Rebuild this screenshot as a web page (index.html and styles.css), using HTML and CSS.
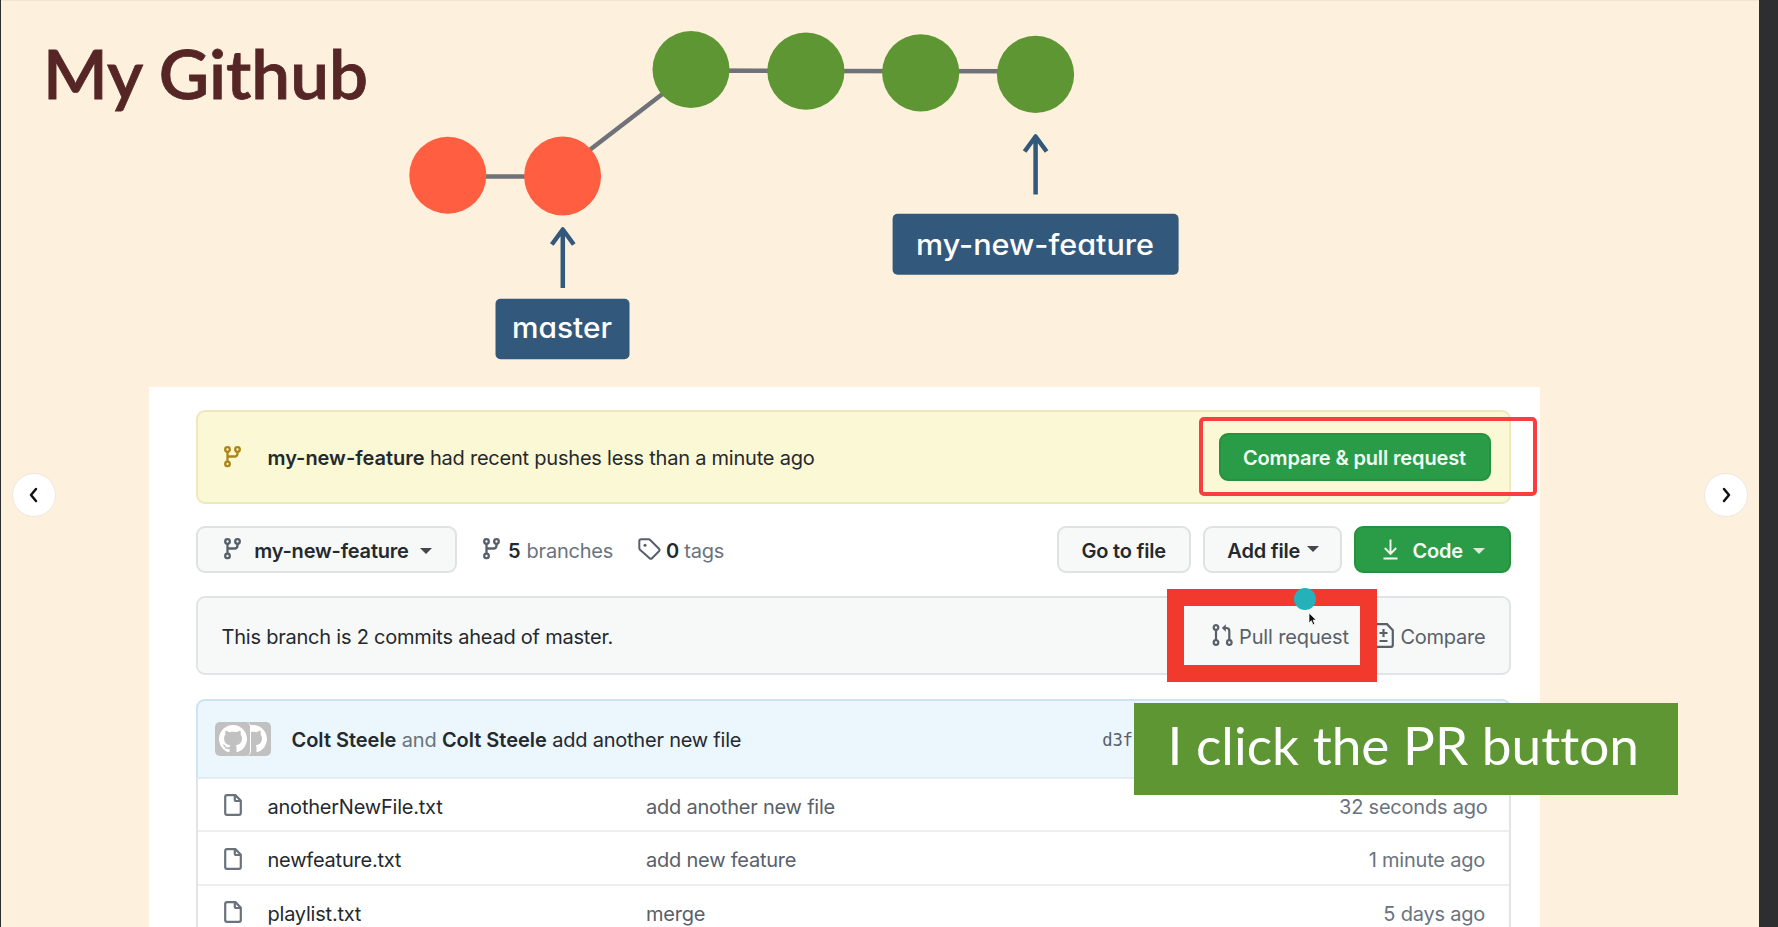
FILE: index.html
```html
<!DOCTYPE html>
<html lang="en">
<head>
<meta charset="utf-8">
<title>My Github</title>
<link rel="stylesheet" href="styles.css">
</head>
<body>
<svg class="defs" width="0" height="0" aria-hidden="true">
  <symbol id="branch" viewBox="0 0 17 21.5">
    <g fill="none" stroke="currentColor" stroke-width="2.3">
      <circle cx="3.5" cy="3.5" r="2.3"/><circle cx="13.5" cy="3.5" r="2.3"/><circle cx="3.5" cy="18" r="2.3"/>
      <path d="M3.5 5.8v9.9M13.5 5.8v1.7q0 3-3 3H3.5"/>
    </g>
  </symbol>
  <symbol id="file" viewBox="0 0 18 22">
    <path d="M3 1.2h8.4L16.8 6.800V19q0 1.800-1.800 1.800H3q-1.800 0-1.800-1.800V3q0-1.800 1.800-1.800zM10.800 1.500V5.500q0 1.500 1.500 1.500h4.300" fill="none" stroke="currentColor" stroke-width="2.2"/>
  </symbol>
  <symbol id="octocat" viewBox="0 0 16 16">
    <path fill="currentColor" d="M8 0C3.58 0 0 3.58 0 8c0 3.540 2.290 6.530 5.470 7.590.4.070.55-.170.55-.380 0-.190-.010-.820-.010-1.490-2.010.370-2.530-.490-2.690-.940-.090-.230-.480-.940-.820-1.130-.280-.150-.680-.520-.010-.530.630-.010 1.080.580 1.230.820.720 1.210 1.870.870 2.330.660.070-.520.280-.870.510-1.070-1.780-.200-3.640-.890-3.640-3.950 0-.870.310-1.590.820-2.150-.080-.200-.360-1.020.080-2.120 0 0 .670-.210 2.200.820.640-.180 1.320-.270 2-.270s1.360.090 2 .270c1.530-1.040 2.200-.820 2.200-.820.440 1.100.160 1.920.080 2.120.510.560.820 1.270.820 2.150 0 3.070-1.870 3.750-3.650 3.950.290.250.540.730.540 1.480 0 1.070-.010 1.930-.010 2.200 0 .210.150.460.550.380A8.010 8.010 0 0 0 16 8c0-4.420-3.580-8-8-8z"/>
  </symbol>
</svg>
<main class="slide">
  <svg class="diagram" viewBox="0 0 1759 387" width="1759" height="387">
    <text class="title" x="43" y="99" textLength="325" lengthAdjust="spacingAndGlyphs">My Github</text>
    <g class="links">
      <path d="M448 176.500H563M563 170.500L691 72M691 70.600L806 71L1035 71.300"/>
    </g>
    <g class="base"><circle cx="447.800" cy="175.300" r="38.500"/><ellipse cx="562.600" cy="176" rx="38.500" ry="39.400"/></g>
    <g class="feature"><circle cx="691" cy="69.500" r="38.500"/><circle cx="805.900" cy="71.200" r="38.600"/><circle cx="920.700" cy="72.800" r="38.600"/><circle cx="1035.500" cy="74.400" r="38.600"/></g>
    <g class="arrows">
      <path d="M562.800 288V229.500M551.800 244.500L562.800 229.500L573.800 244.500"/>
      <path d="M1035.600 194.500V136.500M1024.600 151.500L1035.600 136.500L1046.600 151.500"/>
    </g>
    <g class="tag-boxes"><rect x="495.500" y="298.700" width="134" height="60.500" rx="5"/><rect x="892.600" y="213.700" width="286" height="61" rx="5"/></g>
    <text class="ref" x="512" y="338.300" textLength="100" lengthAdjust="spacingAndGlyphs">master</text>
    <text class="ref" x="916" y="254.800" textLength="238" lengthAdjust="spacingAndGlyphs">my-new-feature</text>
  </svg>

  <section class="repo">
    <div class="notice">
      <svg class="i-branch"><use href="#branch"/></svg>
      <p class="notice-text"><b>my-new-feature</b> <span>had recent pushes less than a minute ago</span></p>
      <button class="btn primary compare-pr">Compare &amp; pull request</button>
    </div>
    <div class="toolbar">
      <button class="btn picker"><svg class="i-branch"><use href="#branch"/></svg><span>my-new-feature</span><i class="caret"></i></button>
      <a class="stat branches"><svg class="i-branch"><use href="#branch"/></svg><b>5</b><span>branches</span></a>
      <a class="stat tags"><svg class="i-tag" viewBox="0 0 23 23"><path d="M1.300 3.300q0-2 2-2h7.200q1 0 1.700.7l8.800 8.800q1.200 1.200 0 2.400l-7 7q-1.200 1.200-2.400 0L2 11.700q-.7-.7-.7-1.700z" fill="none" stroke="currentColor" stroke-width="2"/><circle cx="7" cy="7.300" r="1.500" fill="currentColor"/></svg><b>0</b><span>tags</span></a>
      <button class="btn goto">Go to file</button>
      <button class="btn add"><span>Add file</span><i class="caret"></i></button>
      <button class="btn primary code"><svg class="i-down" viewBox="0 0 15 21"><path d="M7.500 .5v14M1.800 9l5.700 5.800L13.200 9M.5 19.500h14" fill="none" stroke="currentColor" stroke-width="1.900"/></svg><span>Code</span><i class="caret"></i></button>
    </div>
    <div class="ahead">
      <span class="ahead-text">This branch is 2 commits ahead of master.</span>
      <a class="action pull"><svg class="i-pull" viewBox="0 0 21 22"><g fill="none" stroke="currentColor" stroke-width="2.200"><circle cx="4" cy="3.500" r="2.300"/><circle cx="4" cy="18.500" r="2.300"/><circle cx="17.300" cy="18.500" r="2.300"/><path d="M4 6v10M17.300 16V7q0-3-3-3h-2.800"/></g><path d="M9.800 4l4-3.800v7.600z" fill="currentColor"/></svg><span>Pull request</span></a>
      <a class="action diff"><svg class="i-diff" viewBox="0 0 21 25"><g fill="none" stroke="currentColor" stroke-width="2.200"><path d="M3 1.200h11l5.800 6V22q0 1.800-1.800 1.800H3q-1.800 0-1.800-1.800V3q0-1.800 1.800-1.800zM6.500 10h8M10.500 6v8M6.500 18h8"/></g></svg><span>Compare</span></a>
    </div>
    <div class="files">
      <div class="commit">
        <span class="avatars"><i class="avatar front"><svg><use href="#octocat"/></svg></i><i class="avatar back"><svg><use href="#octocat"/></svg></i></span>
        <p class="commit-text"><b>Colt Steele</b> <em>and</em> <b>Colt Steele</b> <span>add another new file</span></p>
        <code class="sha">d3f</code>
      </div>
      <div class="row"><svg class="i-file"><use href="#file"/></svg><span class="name">anotherNewFile.txt</span><span class="msg">add another new file</span><time class="recent">32 seconds ago</time></div>
      <div class="row"><svg class="i-file"><use href="#file"/></svg><span class="name">newfeature.txt</span><span class="msg">add new feature</span><time>1 minute ago</time></div>
      <div class="row"><svg class="i-file"><use href="#file"/></svg><span class="name">playlist.txt</span><span class="msg">merge</span><time>5 days ago</time></div>
    </div>
  </section>

  <div class="mark thin"></div>
  <div class="mark thick"></div>
  <div class="pointer-dot"></div>
  <svg class="cursor" viewBox="0 0 10 16" width="9" height="14"><path d="M1 1v11.500l2.700-2.600 1.800 4.600 2-.8-1.800-4.500h3.500z" fill="#111" stroke="#fff" stroke-width=".8"/></svg>
  <svg class="callout" width="544" height="92.500"><text x="33.500" y="61.700" textLength="471.500" lengthAdjust="spacingAndGlyphs">I click the PR button</text></svg>
  <button class="nav prev"><svg width="10" height="16" viewBox="0 0 10 16"><path d="M7 2L2 8l5 6"/></svg></button>
  <button class="nav next"><svg width="10" height="16" viewBox="0 0 10 16"><path d="M3 2l5 6-5 6"/></svg></button>
</main>
</body>
</html>
```
FILE: styles.css
```css
* { box-sizing: border-box; }
body { margin: 0; width: 1778px; height: 927px; overflow: hidden; background: #2d2e30; font-family: Inter, "Liberation Sans", sans-serif; font-size: 20px; letter-spacing: -.22px; color: #24292e; }
.defs { position: absolute; }
.slide { position: relative; width: 1758px; height: 927px; margin-left: 1px; background: #fdf0dc; border-top: 1px solid #f3e5d1; overflow: hidden; }
.diagram { display: block; margin: -1px 0 0 -1px; letter-spacing: 0; }
.title { font: 600 68px Lato, sans-serif; font-variant-ligatures: none; fill: #562626; stroke: #562626; stroke-width: .8; }
.ref { font: 500 28.500px Inter, sans-serif; font-feature-settings: "cv11"; fill: #fff; }
.links path { fill: none; stroke: #6f7279; stroke-width: 4.500; }
.base { fill: #ff5f40; }
.feature { fill: #5d9632; }
.arrows path { fill: none; stroke: #32597b; stroke-width: 4.500; stroke-linejoin: round; }
.tag-boxes { fill: #32597b; }

.repo { width: 1391px; height: 541px; margin-left: 148px; background: #fff; padding: 23px 29px 0 47px; white-space: nowrap; }
.repo svg { flex: none; display: block; }
b { font-weight: 600; letter-spacing: -.02px; }
.repo span, .repo p, .repo time, .stat b { padding-top: 3px; }
.commit-text span, .notice-text span { padding-top: 0; }
.repo .notice-text, .repo .commit-text { padding-top: 2px; }
.i-branch { width: 17px; height: 21.500px; color: #57606a; }
.notice { height: 93.500px; display: flex; align-items: center; border: 2px solid #efe7bd; border-radius: 9px; background: #fbf8d6; padding: 0 18.500px 0 26px; }
.notice .i-branch { color: #ac8518; }
.notice-text { margin: 0 auto 0 26.500px; }
.btn { font: 600 20px Inter, sans-serif; letter-spacing: -.2px; color: #24292e; height: 47px; padding: 0; border: 2px solid #dfe2e3; border-radius: 9px; background: #f7f9f8; display: flex; align-items: center; justify-content: center; }
.primary { color: #f3fbf4; background: #2a9c48; border-color: #27913f; }
.compare-pr { width: 272px; height: 48.500px; padding-top: 2px; letter-spacing: -.13px; }
.caret { border: 6px solid transparent; border-top-color: currentColor; border-bottom: 0; opacity: .85; }
.toolbar { display: flex; align-items: center; margin-top: 22px; height: 47px; }
.picker { width: 261px; gap: 13px; padding-left: 3px; }
.picker .caret, .code .caret { margin-top: 4px; }
.picker .caret { margin-left: -2px; }
.stat { display: flex; align-items: center; color: #6a737d; }
.stat b { color: #24292e; }
.branches { margin-left: 26px; }
.branches b { margin: 0 6px 0 8px; }
.tags { margin-left: 25px; }
.i-tag { width: 23px; height: 23px; color: #57606a; }
.tags b { margin: 0 5px 0 5px; }
.goto { width: 134.500px; margin-left: auto; padding-top: 3px; }
.add { width: 138.500px; margin: 0 12px; gap: 7px; padding-left: 2px; }
.code { width: 157.500px; gap: 15px; padding-left: 3px; }
.i-down { width: 15px; height: 21px; }
.code .caret { margin-left: -5px; }
.ahead { height: 79.500px; margin-top: 23px; border: 2px solid #e1e4e6; border-radius: 9px; background: #f7f9f8; display: flex; align-items: center; padding: 0 23.500px; }
.ahead-text { margin-right: auto; }
.action { display: flex; align-items: center; color: #586069; }
.pull { letter-spacing: -.15px; }
.i-pull { width: 21px; height: 22px; margin-right: 6px; }
.i-diff { width: 21px; height: 25px; margin: 0 6px 0 24.500px; }
.files { margin-top: 23.500px; height: 260px; border: 2px solid #e2e4e6; border-radius: 9px 9px 0 0; }
.commit { margin: -2px -2px 0; height: 80px; display: flex; align-items: center; background: #ebf6fd; border: 2px solid #cfe4f3; border-bottom-color: #e0edf4; border-radius: 9px 9px 0 0; padding-left: 17px; }
.commit .avatars { display: flex; width: 56px; padding-top: 0; }
.avatar { width: 36px; height: 34px; border-radius: 5px; background: #c1c1c1; color: #fff; padding: 3px 3px 3px 4px; overflow: hidden; }
.avatar svg { width: 28px; height: 28px; }
.front { border-right: 1px solid #fff; z-index: 1; }
.back { margin-left: -16px; }
.commit-text { margin: 0 0 0 20.500px; }
.commit-text em { font-style: normal; color: #6a737d; }
.sha { margin-left: 361px; padding-top: 3px; font: 17.200px "DejaVu Sans Mono", monospace; letter-spacing: -.2px; color: #586069; }
.row { height: 53.500px; display: flex; align-items: center; padding: 0 24px 0 25.500px; border-bottom: 2px solid #eceeef; }
.i-file { width: 18px; height: 22px; margin-top: 1.500px; color: #6a737d; }
.row .name, .row .msg, .row time { padding-top: 4.500px; }
.name { width: 378.500px; margin-left: 26px; }
.msg { margin-right: auto; color: #586069; }
time { color: #6a737d; }
.recent { margin-right: -2.500px; }

.mark { position: absolute; }
.thin { left: 1198px; top: 416px; width: 338px; height: 79px; border: 4px solid #f83e3e; border-radius: 5px; }
.thick { left: 1166px; top: 587.500px; width: 209.500px; height: 93.500px; border: 17px solid #f2392d; }
.pointer-dot { position: absolute; left: 1292.500px; top: 587px; width: 22px; height: 22px; border-radius: 50%; background: #25b0ba; }
.cursor { position: absolute; left: 1307px; top: 611px; }
.callout { position: absolute; left: 1133px; top: 701.500px; background: #5d9632; letter-spacing: 0; }
.callout text { font: 400 53px Lato, sans-serif; font-variant-ligatures: none; fill: #fff; }
.nav { position: absolute; top: 471.500px; width: 44px; height: 44px; padding: 0; border: 1px solid #ece9e0; border-radius: 50%; background: #fff; display: grid; place-items: center; }
.nav path { fill: none; stroke: #111; stroke-width: 2.500; stroke-linecap: round; stroke-linejoin: round; }
.prev { left: 11px; }
.next { left: 1703px; }
```
